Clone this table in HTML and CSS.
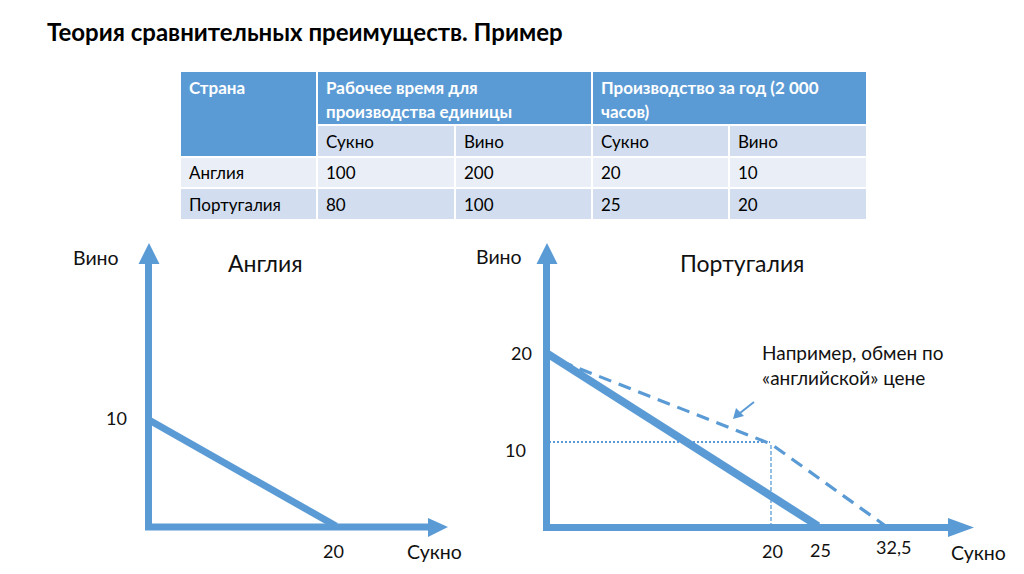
FILE: index.html
```html
<!DOCTYPE html>
<html lang="ru">
<head>
<meta charset="utf-8">
<link rel="stylesheet" href="styles.css">
</head>
<body>
<div class="slide">
  <h1 class="title">Теория сравнительных преимуществ. Пример</h1>
  <table class="data">
    <colgroup>
      <col class="c1"><col class="c2"><col class="c3"><col class="c4"><col class="c5">
    </colgroup>
    <thead>
      <tr class="h1row">
        <th rowspan="2" class="hcell">Страна</th>
        <th colspan="2" class="hcell">Рабочее время для производства единицы</th>
        <th colspan="2" class="hcell">Производство за год (2 000 часов)</th>
      </tr>
      <tr class="dark">
        <td>Сукно</td><td>Вино</td><td>Сукно</td><td>Вино</td>
      </tr>
    </thead>
    <tbody>
      <tr class="light">
        <td>Англия</td><td>100</td><td>200</td><td>20</td><td>10</td>
      </tr>
      <tr class="dark">
        <td>Португалия</td><td>80</td><td>100</td><td>25</td><td>20</td>
      </tr>
    </tbody>
  </table>
  <div class="charts">
    <svg class="chart left" width="470" height="339" viewBox="0 235 470 339">
      <g class="blue">
        <line x1="148.5" y1="530" x2="148.5" y2="260" stroke-width="7"/>
        <polygon points="149,243 138.5,264 159.5,264"/>
        <line x1="145" y1="527" x2="430" y2="527" stroke-width="7"/>
        <polygon points="448,527 428,518 428,537"/>
        <line x1="149" y1="420" x2="336" y2="526" stroke-width="7"/>
      </g>
      <text class="lbl" x="73" y="265">Вино</text>
      <text class="ttl" x="228" y="272">Англия</text>
      <text class="num" x="106" y="425">10</text>
      <text class="num" x="323" y="558">20</text>
      <text class="lbl" x="407" y="559">Сукно</text>
    </svg>
    <svg class="chart right" width="554" height="339" viewBox="470 235 554 339">
      <g class="blue">
        <line x1="546.5" y1="530" x2="546.5" y2="260" stroke-width="7"/>
        <polygon points="547,243 536.5,264 557.5,264"/>
        <line x1="543" y1="527.5" x2="950" y2="527.5" stroke-width="7"/>
        <polygon points="974,527.5 948,518 948,537"/>
        <line x1="548" y1="354" x2="818" y2="526" stroke-width="8"/>
        <polyline class="dash" points="560,361 771,444 887,527" stroke-width="3.2"/>
        <line class="dot" x1="549" y1="442" x2="770" y2="442" stroke-width="2"/>
        <line class="thin" x1="771" y1="445" x2="771" y2="527" stroke-width="1.3"/>
        <line x1="754" y1="402" x2="740" y2="413" stroke-width="2"/>
        <polygon points="733,419 736,408 744,416"/>
      </g>
      <text class="lbl" x="476" y="264">Вино</text>
      <text class="ttl" x="680" y="272">Португалия</text>
      <text class="num" x="511" y="360">20</text>
      <text class="num" x="505" y="457">10</text>
      <text class="num" x="762" y="558">20</text>
      <text class="num" x="810" y="557">25</text>
      <text class="num" x="876" y="554">32,5</text>
      <text class="lbl" x="951" y="560">Сукно</text>
      <text class="note" x="762" y="360">Например, обмен по</text>
      <text class="note" x="762" y="385">«английской» цене</text>
    </svg>
  </div>
</div>
</body>
</html>
```
FILE: styles.css
```css
* { box-sizing: border-box; }
html, body {
  margin: 0;
  padding: 0;
  background: #ffffff;
}
body {
  font-family: "Lato", "Open Sans", sans-serif;
  color: #000;
}
.slide {
  width: 1024px;
  height: 574px;
  overflow: hidden;
  display: flex;
  flex-direction: column;
}
.title {
  margin: 0;
  padding: 17px 0 0 47px;
  height: 73px;
  font-size: 24px;
  font-weight: 700;
  line-height: 30px;
  letter-spacing: 0;
}
.data {
  margin-left: 181px;
  border-collapse: collapse;
  width: 685px;
  table-layout: fixed;
  font-size: 17px;
}
.c1 { width: 136px; }
.c2 { width: 138px; }
.c3 { width: 137px; }
.c4 { width: 137px; }
.c5 { width: 137px; }
.data th, .data td {
  border: 2px solid #ffffff;
  text-align: left;
  padding: 0 8px;
  vertical-align: middle;
}
.data thead tr:first-child th { border-top: none; }
.data th:first-child, .data td:first-child { border-left: none; }
.data th:last-child, .data td:last-child { border-right: none; }
.data tbody tr:last-child td { border-bottom: none; }
.hcell {
  background: #5b9bd5;
  color: #ffffff;
  font-weight: 700;
  font-size: 17px;
  line-height: 24px;
  vertical-align: top !important;
  padding-top: 4px !important;
}
.h1row { height: 52px; }
.dark td { background: #d2deef; height: 32px; }
.light td { background: #eaeff7; height: 31px; }
.data tbody tr td { height: 31px; }
.charts {
  display: flex;
  margin-top: 16px;
}
.chart { display: block; }
.blue line, .blue polyline { stroke: #5b9bd5; fill: none; }
.blue polygon { fill: #5b9bd5; }
.blue .dash { stroke-dasharray: 13 8; }
.blue .dot { stroke-dasharray: 2 2; }
.blue .thin { stroke-dasharray: 4 2; }
.lbl {
  font-family: "Lato", "Open Sans", sans-serif;
  font-size: 19.5px;
  fill: #111;
}
.num {
  font-family: "Lato", "Open Sans", sans-serif;
  font-size: 18px;
  fill: #111;
}
.ttl {
  font-family: "Lato", "Open Sans", sans-serif;
  font-size: 23px;
  fill: #111;
}
.note {
  font-family: "Lato", "Open Sans", sans-serif;
  font-size: 19px;
  fill: #111;
}
```
